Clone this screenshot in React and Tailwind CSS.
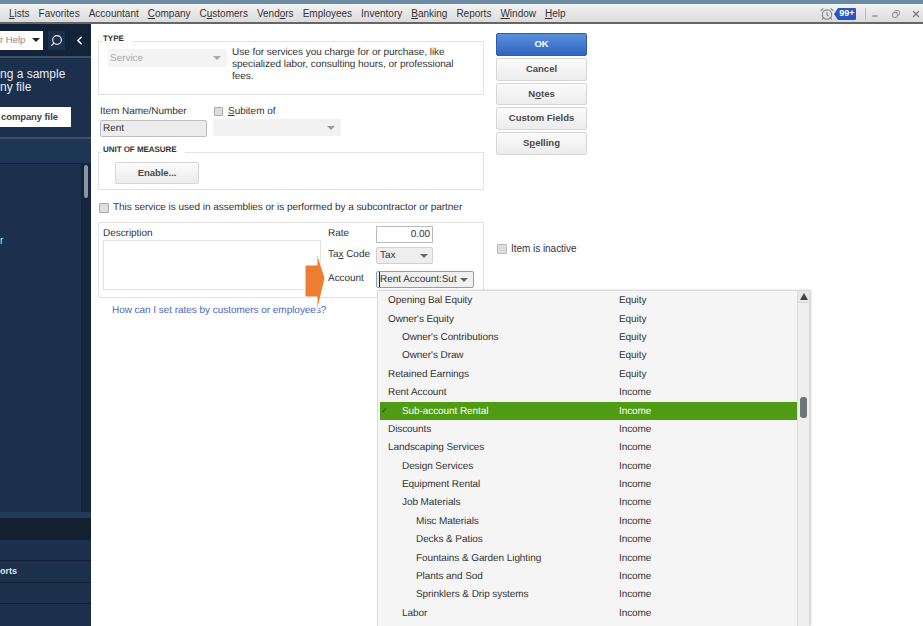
import { Search, ChevronLeft, AlarmClock, Minus, X, Copy } from "lucide-react";

const MENUS = [
  ["Lists", "L"],
  ["Favorites"],
  ["Accountant"],
  ["Company", "C"],
  ["Customers", "u"],
  ["Vendors", "o"],
  ["Employees"],
  ["Inventory"],
  ["Banking", "B"],
  ["Reports"],
  ["Window", "W"],
  ["Help", "H"],
];

const ACCOUNTS = [
  ["Opening Bal Equity", "Equity", 0],
  ["Owner's Equity", "Equity", 0],
  ["Owner's Contributions", "Equity", 1],
  ["Owner's Draw", "Equity", 1],
  ["Retained Earnings", "Equity", 0],
  ["Rent Account", "Income", 0],
  ["Sub-account Rental", "Income", 1, true],
  ["Discounts", "Income", 0],
  ["Landscaping Services", "Income", 0],
  ["Design Services", "Income", 1],
  ["Equipment Rental", "Income", 1],
  ["Job Materials", "Income", 1],
  ["Misc Materials", "Income", 2],
  ["Decks & Patios", "Income", 2],
  ["Fountains & Garden Lighting", "Income", 2],
  ["Plants and Sod", "Income", 2],
  ["Sprinklers & Drip systems", "Income", 2],
  ["Labor", "Income", 1],
];

const INDENTS = ["pl-[8px]", "pl-[22px]", "pl-[36px]"];

function Caret({ className = "border-t-[#666]" }) {
  return <span className={`h-0 w-0 border-x-[4px] border-t-[4px] border-x-transparent ${className}`} />;
}

function MenuLabel({ label, mark }) {
  if (!mark) return <span>{label}</span>;
  const i = label.indexOf(mark);
  return (
    <span>
      {label.slice(0, i)}
      <span className="underline">{mark}</span>
      {label.slice(i + 1)}
    </span>
  );
}

function GrayButton({ children, className = "" }) {
  return (
    <button className={`flex items-center justify-center rounded-[2px] border border-[#d6d6d6] bg-gradient-to-b from-[#fbfbfb] to-[#ececec] text-[9.5px] font-bold text-[#4a4a4a] ${className}`}>
      {children}
    </button>
  );
}

function Legend({ children }) {
  return (
    <span className="absolute top-[-9px] left-[3px] bg-white pr-2 pl-[1px] text-[8px] leading-[12px] font-bold text-[#333]">
      {children}
    </span>
  );
}

function Sidebar() {
  return (
    <aside className="flex w-[91px] shrink-0 flex-col overflow-hidden bg-[#1a304d] text-white">
      <div className="flex h-[34px] shrink-0 items-center border-b-2 border-[#3c4f63] bg-[#13233a]">
        <div className="flex h-[19px] w-[43px] items-center justify-between bg-white pr-[3px] text-[9.5px] text-[#888]">
          <span>r Help</span>
          <Caret className="border-t-[#222]" />
        </div>
        <div className="ml-[5px] flex h-[19px] w-[17px] items-center justify-center bg-[#1a304d]">
          <Search size={13} className="-scale-x-100" />
        </div>
        <ChevronLeft size={13} strokeWidth={3} className="ml-[8px]" />
      </div>
      <div className="h-[81px] shrink-0 border-b-2 border-[#3c4f63]">
        <p className="mt-[10px] text-[12px] leading-[13px] whitespace-nowrap text-[#e8edf2]">
          ng a sample
          <br />
          ny file
        </p>
        <div className="mt-[13px] flex h-[20px] w-[71px] items-center bg-white pl-[1px] text-[9.5px] font-bold tracking-[-0.1px] whitespace-nowrap text-[#444]">
          company file
        </div>
      </div>
      <div className="h-[25px] shrink-0 border-b border-[#13233a] bg-[#1e3655]" />
      <div className="flex flex-1 justify-between bg-[#1a304d]">
        <span className="mt-[72px] text-[10px] leading-none text-[#cfe0ee]">r</span>
        <div className="w-[10px] border-x border-[#13233a] bg-[#15273f]">
          <div className="mx-auto mt-[1px] h-[33px] w-[4px] rounded-full bg-[#8b95a1]" />
        </div>
      </div>
      <div className="h-[6px] shrink-0 bg-[#213a58]" />
      <div className="h-[22px] shrink-0 bg-[#13202f]" />
      <div className="h-[21px] shrink-0 border-b border-[#13202f]" />
      <div className="flex h-[22px] shrink-0 items-center border-b border-[#13202f] text-[9px] font-bold text-[#e5e5e5]">
        <span>orts</span>
      </div>
      <div className="h-[21px] shrink-0 border-b border-[#13202f]" />
      <div className="h-[22px] shrink-0" />
    </aside>
  );
}

function AccountMenu() {
  return (
    <div className="absolute top-[290px] left-[377px] flex h-[336px] w-[433px] overflow-hidden border-t border-l border-[#dcdcdc] bg-[#f5f5f5] shadow-[1px_0_2px_#ccc]">
      <ul className="flex-1 pt-[0.5px] pl-[2px] text-[10px] tracking-[-0.08px] text-[#333] [text-rendering:geometricPrecision]">
        {ACCOUNTS.map(([name, type, depth, active]) => (
          <li
            key={name}
            className={`relative flex h-[18.4px] items-center ${active ? "bg-[#4f9c14] text-white" : ""}`}
          >
            {active && <span className="absolute left-[1px] text-[8px] text-[#1c3a08]">✓</span>}
            <span className={`w-[239px] ${INDENTS[depth]}`}>{name}</span>
            <span>{type}</span>
          </li>
        ))}
      </ul>
      <div className="flex w-[13px] shrink-0 flex-col items-center border-x border-[#dcdcdc] bg-[#efefef]">
        <div className="flex h-[12px] w-full items-center justify-center border-b border-[#d4d4d4] bg-[#e8e8e8]">
          <span className="h-0 w-0 border-x-[4px] border-b-[7px] border-x-transparent border-b-[#444]" />
        </div>
        <div className="mt-[94px] h-[21px] w-[7px] rounded-[3px] bg-[#6b7678]" />
      </div>
    </div>
  );
}

export default function App() {
  return (
    <div className="relative flex h-[626px] w-[923px] flex-col overflow-hidden bg-white font-['Liberation_Sans',sans-serif]">
      <div className="h-[4px] shrink-0 bg-[#6b8aa3]" />
      <header className="flex h-[20px] shrink-0 items-center justify-between border-b-2 border-[#666] bg-gradient-to-b from-[#f2f2f2] to-[#dcdcdc] pt-[1px] pr-[2px] pl-[9px] text-[10px] text-[#333]">
        <nav className="flex gap-[9px]">
          {MENUS.map(([label, mark]) => (
            <MenuLabel key={label} label={label} mark={mark} />
          ))}
        </nav>
        <div className="flex items-center">
          <AlarmClock size={14} className="text-[#888]" />
          <span className="h-0 w-0 border-y-[6px] border-r-[4px] border-y-transparent border-r-[#2a56c0]" />
          <span className="flex h-[12px] w-[18px] items-center justify-center rounded-r-[1px] bg-[#2a56c0] text-[9px] font-bold text-white">
            99+
          </span>
          <span className="mr-[5px] ml-[9px] h-[12px] w-px bg-[#bbb]" />
          <Minus size={8} strokeWidth={3} className="mt-[4px] text-[#777]" />
          <Copy size={8} strokeWidth={2.5} className="ml-[13px] -scale-x-100 text-[#777]" />
          <X size={10} strokeWidth={3} className="ml-[11px] text-[#778]" />
        </div>
      </header>

      <div className="flex min-h-0 flex-1">
        <Sidebar />
        <main className="flex flex-1 gap-[12px] pt-[9px] pl-[7px]">
          <div className="flex w-[386px] flex-col pt-[8px] text-[10px] tracking-[-0.04px] text-[#333] [text-rendering:geometricPrecision]">
            <div className="relative flex h-[54px] shrink-0 gap-[5px] border border-[#e2e2e2] pt-[7px] pl-[9px]">
              <Legend>TYPE</Legend>
              <div className="flex h-[18px] w-[119px] items-center justify-between rounded-[2px] bg-[#f4f4f4] pr-[6px] pl-[2px] text-[#aaa]">
                Service
                <Caret className="border-t-[#aaa]" />
              </div>
              <p className="-mt-[2px] w-[240px] leading-[12px]">
                Use for services you charge for or purchase, like specialized labor, consulting hours, or professional fees.
              </p>
            </div>

            <div className="mt-[10px] flex h-[32px] shrink-0 gap-[6px] pl-[2px]">
              <div className="w-[107px]">
                <label className="block leading-[13px]">Item Name/Number</label>
                <div className="mt-[2px] flex h-[17px] items-center rounded-[2px] border border-[#bdbdbd] bg-[#ededed] pl-[2px]">Rent</div>
              </div>
              <div className="w-[128px]">
                <label className="flex h-[13px] items-center gap-[5px] pl-[1px] leading-[13px]">
                  <span className="h-[9px] w-[9px] rounded-[1px] border border-[#aaa] bg-[#ddd]" />
                  <span><span className="underline">S</span>ubitem of</span>
                </label>
                <div className="mt-[1px] flex h-[17px] items-center justify-end rounded-[2px] bg-[#f2f2f2] pr-[6px]">
                  <Caret className="border-t-[#999]" />
                </div>
              </div>
            </div>

            <div className="relative mt-[15px] flex h-[38px] shrink-0 items-start border border-[#e2e2e2] pt-[9px] pl-[16px]">
              <Legend>UNIT OF MEASURE</Legend>
              <GrayButton className="h-[22px] w-[84px]">Enable...</GrayButton>
            </div>

            <label className="mt-[11px] flex h-[13px] shrink-0 items-center gap-[4px] pl-[1px]">
              <span className="h-[10px] w-[10px] rounded-[1px] border border-[#aaa] bg-[#ddd]" />
              This service is used in assemblies or is performed by a subcontractor or partner
            </label>

            <section className="mt-[8px] flex h-[76px] shrink-0 border border-[#e2e2e2] pt-[3px] pl-[4px]">
              <div className="w-[225px]">
                <div className="h-[13px] pt-[1px] leading-[13px]">Description</div>
                <div className="mt-[1px] h-[50px] w-[218px] border border-[#e2e2e2]" />
              </div>
              <div className="flex flex-col">
                <div className="flex h-[17px] items-center">
                  <span className="w-[48px] pb-[2px]">Rate</span>
                  <div className="flex h-[17px] w-[57px] items-center justify-end border border-[#bbb] pr-[2px]">0.00</div>
                </div>
                <div className="mt-[4px] flex h-[17px] items-center">
                  <span className="w-[48px] pb-[2px]">Ta<span className="underline">x</span> Code</span>
                  <div className="flex h-[17px] w-[57px] items-center justify-between rounded-[2px] border border-[#d0d0d0] bg-[#eee] pr-[4px] pl-[3px]">
                    Tax
                    <Caret />
                  </div>
                </div>
                <div className="mt-[7px] flex h-[17px] items-center">
                  <span className="w-[48px] pb-[2px]">Account</span>
                  <div className="flex h-[17px] w-[98px] items-center justify-between rounded-[2px] border border-[#7da2ce] bg-[#f0f0f0] pr-[5px] pl-[2px] whitespace-nowrap">
                    <span className="border-l border-[#222]">Rent Account:Sut</span>
                    <Caret />
                  </div>
                </div>
              </div>
            </section>

            <a className="mt-[5px] ml-[14px] text-[#4a67c0]">How can I set rates by customers or employees?</a>
          </div>

          <div className="flex w-[91px] flex-col gap-[2px]">
            <button className="h-[23px] rounded-[2px] border border-[#2a5bb0] bg-gradient-to-b from-[#5a8fdc] to-[#2f66c0] text-[9.5px] font-bold text-white">OK</button>
            <GrayButton className="h-[23px]">Cancel</GrayButton>
            <GrayButton className="h-[22px]"><span>N<span className="underline">o</span>tes</span></GrayButton>
            <GrayButton className="h-[23px]">Custom Fields</GrayButton>
            <GrayButton className="h-[23px]"><span>S<span className="underline">p</span>elling</span></GrayButton>
            <label className="mt-[85px] flex h-[13px] items-center gap-[4px] pl-[1px] text-[10px] tracking-[-0.04px] text-[#333]">
              <span className="h-[10px] w-[10px] rounded-[1px] border border-[#bbb] bg-[#ddd]" />
              Item is inactive
            </label>
          </div>
        </main>
      </div>

      <AccountMenu />

      {/* orange callout arrow pointing at the Account field */}
      <svg className="absolute top-[251px] left-[303px]" width="24" height="64" viewBox="0 0 24 64">
        <path d="M2 14 H14 V2 L22 27 L14 61 V46 H2 Z" fill="#ed7d31" stroke="#fff" strokeWidth="1" />
      </svg>
    </div>
  );
}
